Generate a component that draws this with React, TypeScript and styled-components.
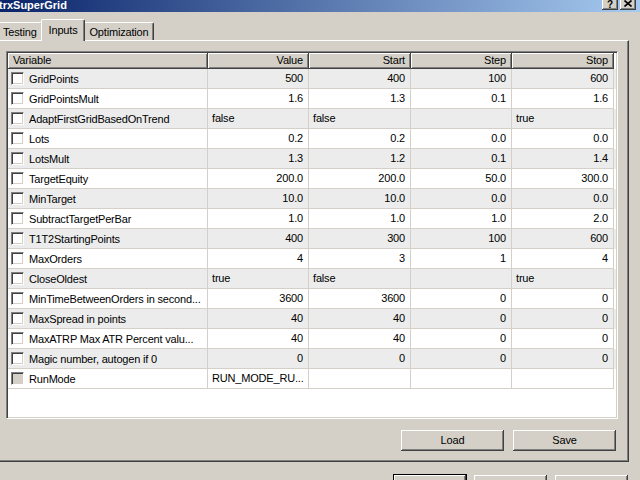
import styled, { createGlobalStyle } from "styled-components";

const face = "#d4d0c8";
const shadow = "#808080";
const dark = "#404040";

const GlobalStyle = createGlobalStyle`
  html, body {
    margin: 0;
    padding: 0;
    background: ${face};
  }
  * {
    box-sizing: border-box;
  }
`;

const Window = styled.div`
  width: 640px;
  height: 480px;
  overflow: hidden;
  background: ${face};
  font-family: "Liberation Sans", Arial, sans-serif;
  font-size: 11px;
  letter-spacing: -0.18px;
  color: #000;
  display: flex;
  flex-direction: column;
`;

const TitleBar = styled.div`
  height: 12px;
  flex: none;
  display: flex;
  align-items: flex-start;
  overflow: hidden;
  padding: 0 4px 0 0;
  background: linear-gradient(to right, #0a246a, #a6caf0);
`;

const TitleText = styled.div`
  flex: 1;
  margin-left: -1px;
  color: #fff;
  font-weight: bold;
  font-size: 11px;
  line-height: 11px;
  letter-spacing: 0;
  white-space: nowrap;
`;

const CaptionButton = styled.div`
  width: 16px;
  height: 10px;
  flex: none;
  margin-left: 2px;
  background: ${face};
  box-shadow: inset -1px -1px ${dark}, inset 1px 0 #fff,
    inset -2px -2px ${shadow};
  display: flex;
  align-items: flex-start;
  justify-content: center;
  font-weight: bold;
  font-size: 10px;
  line-height: 9px;
`;

const TabStrip = styled.div`
  display: flex;
  align-items: flex-end;
  height: 22px;
  margin: 7px 0 -1px -3px;
  position: relative;
  z-index: 1;
`;

const Tab = styled.div<{ $active?: boolean }>`
  height: ${(p) => (p.$active ? 22 : 18)}px;
  margin: ${(p) => (p.$active ? "0 -2px 0 -2px" : "0 0 1px 0")};
  padding: ${(p) => (p.$active ? "4px 7px 0" : "3px 5px 0")};
  background: ${face};
  border-top: 1px solid #fff;
  border-left: 1px solid #fff;
  border-right: 1px solid ${dark};
  border-radius: 2px 2px 0 0;
  box-shadow: inset -1px 0 ${shadow};
  white-space: nowrap;
  line-height: 13px;
  position: relative;
  z-index: ${(p) => (p.$active ? 2 : 1)};
`;

const Panel = styled.div`
  width: 632px;
  margin-left: -3px;
  padding: 10px 8px 9px 8px;
  border-top: 1px solid #fff;
  border-left: 1px solid #fff;
  border-right: 1px solid ${dark};
  border-bottom: 1px solid ${dark};
  box-shadow: inset -1px -1px ${shadow};
  display: flex;
  flex-direction: column;
`;

const ListView = styled.div`
  width: 612px;
  height: 368px;
  background: #fff;
  border-top: 1px solid ${shadow};
  border-left: 1px solid ${shadow};
  border-right: 1px solid #fff;
  border-bottom: 1px solid #fff;
  box-shadow: inset 1px 1px ${dark}, inset -1px -1px ${face};
  padding: 1px;
  overflow: hidden;
`;

const columns = "200px 101px 102px 101px 102px";

const HeaderRow = styled.div`
  display: grid;
  grid-template-columns: ${columns};
  height: 16px;
`;

const HeaderCell = styled.div<{ $align?: "left" | "right" }>`
  background: ${face};
  border-right: 1px solid ${dark};
  border-bottom: 1px solid ${dark};
  box-shadow: inset 1px 1px #fff, inset -1px -1px ${shadow};
  text-align: ${(p) => p.$align || "right"};
  padding: 0 5px;
  line-height: 15px;
  white-space: nowrap;
`;

const Row = styled.div<{ $shaded?: boolean }>`
  display: grid;
  grid-template-columns: ${columns};
  height: 20px;
  background: ${(p) => (p.$shaded ? "#ececec" : "#fff")};
`;

const Cell = styled.div<{ $align?: "left" | "right" }>`
  border-right: 1px solid ${face};
  border-bottom: 1px solid ${face};
  text-align: ${(p) => p.$align || "right"};
  padding: ${(p) => (p.$align === "left" ? "0 4px" : "0 5px")};
  line-height: 19px;
  white-space: nowrap;
  overflow: hidden;
`;

const NameCell = styled.div`
  border-right: 1px solid ${face};
  border-bottom: 1px solid ${face};
  display: flex;
  align-items: center;
  padding-left: 3px;
  white-space: nowrap;
  overflow: hidden;
`;

const CheckBox = styled.div<{ $disabled?: boolean }>`
  width: 13px;
  height: 13px;
  flex: none;
  margin-right: 5px;
  background: ${(p) => (p.$disabled ? face : "#fff")};
  border-top: 1px solid ${shadow};
  border-left: 1px solid ${shadow};
  border-right: 1px solid #fff;
  border-bottom: 1px solid #fff;
  box-shadow: inset 1px 1px ${dark}, inset -1px -1px ${face};
`;

const ButtonRow = styled.div`
  display: flex;
  justify-content: flex-end;
  gap: 7px;
  margin-top: 10px;
  padding-right: 3px;
`;

const Button = styled.div<{ $width: number; $default?: boolean }>`
  width: ${(p) => p.$width}px;
  height: 23px;
  flex: none;
  background: ${face};
  border: 1px solid ${(p) => (p.$default ? "#000" : "transparent")};
  box-shadow: inset -1px -1px ${dark}, inset 1px 1px #fff,
    inset -2px -2px ${shadow};
  display: flex;
  align-items: center;
  justify-content: center;
  line-height: 13px;
`;

const DialogButtons = styled.div`
  display: flex;
  justify-content: flex-end;
  gap: 6px;
  margin-top: 12px;
  padding-right: 11px;
`;

type Param = {
  name: string;
  value: string;
  start: string;
  step: string;
  stop: string;
  text?: boolean;
  disabled?: boolean;
};

const params: Param[] = [
  { name: "GridPoints", value: "500", start: "400", step: "100", stop: "600" },
  { name: "GridPointsMult", value: "1.6", start: "1.3", step: "0.1", stop: "1.6" },
  { name: "AdaptFirstGridBasedOnTrend", value: "false", start: "false", step: "", stop: "true", text: true },
  { name: "Lots", value: "0.2", start: "0.2", step: "0.0", stop: "0.0" },
  { name: "LotsMult", value: "1.3", start: "1.2", step: "0.1", stop: "1.4" },
  { name: "TargetEquity", value: "200.0", start: "200.0", step: "50.0", stop: "300.0" },
  { name: "MinTarget", value: "10.0", start: "10.0", step: "0.0", stop: "0.0" },
  { name: "SubtractTargetPerBar", value: "1.0", start: "1.0", step: "1.0", stop: "2.0" },
  { name: "T1T2StartingPoints", value: "400", start: "300", step: "100", stop: "600" },
  { name: "MaxOrders", value: "4", start: "3", step: "1", stop: "4" },
  { name: "CloseOldest", value: "true", start: "false", step: "", stop: "true", text: true },
  { name: "MinTimeBetweenOrders in second...", value: "3600", start: "3600", step: "0", stop: "0" },
  { name: "MaxSpread in points", value: "40", start: "40", step: "0", stop: "0" },
  { name: "MaxATRP Max ATR Percent valu...", value: "40", start: "40", step: "0", stop: "0" },
  { name: "Magic number, autogen if 0", value: "0", start: "0", step: "0", stop: "0" },
  { name: "RunMode", value: "RUN_MODE_RU...", start: "", step: "", stop: "", text: true, disabled: true },
];

function CloseGlyph() {
  return (
    <svg width="8" height="7" viewBox="0 0 8 7">
      <path d="M0.5 0.5 L7.5 6.5 M7.5 0.5 L0.5 6.5" stroke="#000" strokeWidth="1.6" />
    </svg>
  );
}

export default function App() {
  return (
    <>
      <GlobalStyle />
      <Window>
        <TitleBar>
          <TitleText>trxSuperGrid</TitleText>
          <CaptionButton>?</CaptionButton>
          <CaptionButton>
            <CloseGlyph />
          </CaptionButton>
        </TitleBar>
        <TabStrip>
          <Tab>Testing</Tab>
          <Tab $active>Inputs</Tab>
          <Tab>Optimization</Tab>
        </TabStrip>
        <Panel>
          <ListView>
            <HeaderRow>
              <HeaderCell $align="left">Variable</HeaderCell>
              <HeaderCell>Value</HeaderCell>
              <HeaderCell>Start</HeaderCell>
              <HeaderCell>Step</HeaderCell>
              <HeaderCell>Stop</HeaderCell>
            </HeaderRow>
            {params.map((p, i) => {
              const align = p.text ? "left" : "right";
              return (
                <Row key={p.name} $shaded={i % 2 === 0}>
                  <NameCell>
                    <CheckBox $disabled={p.disabled} />
                    {p.name}
                  </NameCell>
                  <Cell $align={align}>{p.value}</Cell>
                  <Cell $align={align}>{p.start}</Cell>
                  <Cell $align={align}>{p.step}</Cell>
                  <Cell $align={align}>{p.stop}</Cell>
                </Row>
              );
            })}
          </ListView>
          <ButtonRow>
            <Button $width={105}>Load</Button>
            <Button $width={105}>Save</Button>
          </ButtonRow>
        </Panel>
        <DialogButtons>
          <Button $width={74} $default />
          <Button $width={75} />
          <Button $width={75} />
        </DialogButtons>
      </Window>
    </>
  );
}
